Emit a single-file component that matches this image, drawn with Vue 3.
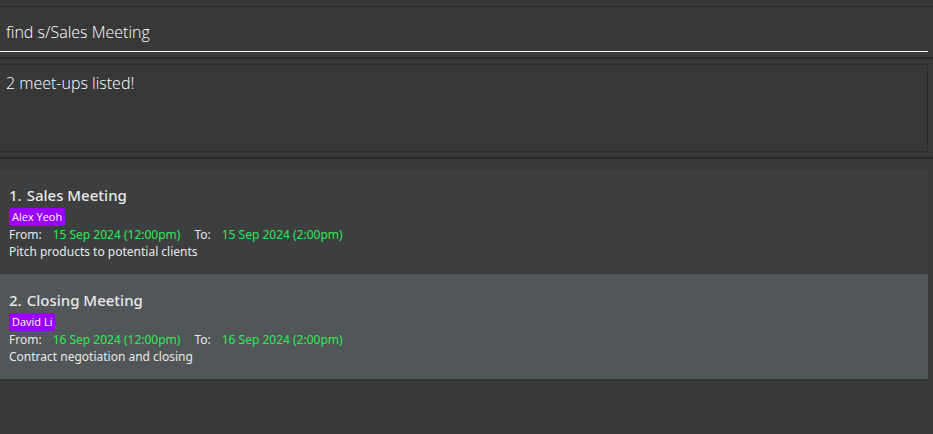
<script setup>
import { ref } from 'vue'

const command = ref('find s/Sales Meeting')
const meetUps = [
  {
    subject: 'Sales Meeting',
    contact: 'Alex Yeoh',
    from: '15 Sep 2024 (12:00pm)',
    to: '15 Sep 2024 (2:00pm)',
    info: 'Pitch products to potential clients',
  },
  {
    subject: 'Closing Meeting',
    contact: 'David Li',
    from: '16 Sep 2024 (12:00pm)',
    to: '16 Sep 2024 (2:00pm)',
    info: 'Contract negotiation and closing',
  },
]
</script>

<template>
  <main class="window">
    <form class="command" @submit.prevent>
      <input v-model="command" class="command-input" type="text" aria-label="Command" />
    </form>
    <section class="result">
      <output class="result-text">{{ meetUps.length }} meet-ups listed!</output>
    </section>
    <ul class="list">
      <li v-for="(m, i) in meetUps" :key="m.subject" class="card">
        <h2 class="title"><span>{{ i + 1 }}.</span><span>{{ m.subject }}</span></h2>
        <span class="tag">{{ m.contact }}</span>
        <div class="times">
          <span class="period">From: <time class="time">{{ m.from }}</time></span>
          <span class="period">To: <time class="time">{{ m.to }}</time></span>
        </div>
        <p class="info">{{ m.info }}</p>
      </li>
    </ul>
  </main>
</template>

<style>
body {
  background: #383838;
}
</style>

<style scoped>
.window {
  min-height: 100vh;
  box-sizing: border-box;
  padding-top: 6px;
  background: #383838;
  color: #e8e8e8;
  font-family: "Open Sans", "Noto Sans", sans-serif;
}
.command {
  padding: 10px 5px 5px 0;
  border-top: 1px solid #2a2a2a;
  border-bottom: 2px solid #2a2a2a;
}
.command-input {
  display: block;
  width: 100%;
  height: 35px;
  box-sizing: border-box;
  margin: 0;
  padding: 0 6px 5px;
  border: 0;
  border-bottom: 1px solid #fff;
  border-radius: 0;
  outline: 0;
  background: transparent;
  color: #fff;
  font: 300 16px/24px "Open Sans", "Noto Sans", sans-serif;
}
.result {
  padding: 5px 5px 5px 0;
  border-bottom: 2px solid #2a2a2a;
}
.result-text {
  display: block;
  min-height: 88px;
  box-sizing: border-box;
  padding: 6px;
  border: 1px solid #2a2a2a;
  border-left: 0;
  color: #fff;
  font-size: 16px;
  font-weight: 300;
  line-height: 24px;
}
.list {
  margin: 0;
  padding: 10px 5px 0 0;
  list-style: none;
}
.card {
  display: flex;
  flex-direction: column;
  align-items: flex-start;
  padding: 14px 9px 13px;
  background: #3c3e3f;
}
.card:nth-child(even) {
  background: #515658;
}
.title {
  display: flex;
  gap: 5px;
  margin: 0;
  padding-bottom: 1px;
  font-family: "Noto Sans", "Open Sans", sans-serif;
  font-size: 15px;
  font-weight: 500;
  line-height: 24px;
}
.tag {
  padding: 0 3px;
  border-radius: 2px;
  background: #9900ff;
  color: #fff;
  font-size: 11px;
  line-height: 18px;
}
.times,
.info {
  font-family: "Noto Sans", "Open Sans", sans-serif;
  font-size: 12px;
}
.times {
  display: flex;
  gap: 14px;
  line-height: 17px;
}
.period {
  display: flex;
  gap: 11px;
}
.time {
  color: #2bea55;
}
.info {
  margin: 0;
  line-height: 18px;
}
</style>
